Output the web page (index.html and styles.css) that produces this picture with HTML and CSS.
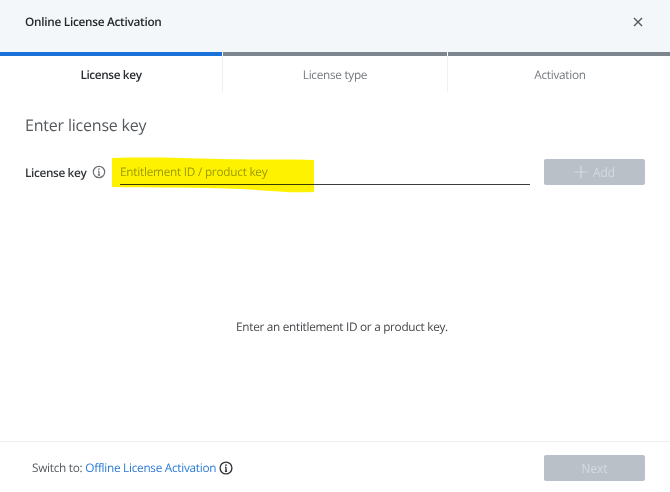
FILE: index.html
```html
<!DOCTYPE html>
<html lang="en">
<head>
<meta charset="utf-8">
<title>Online License Activation</title>
<link rel="stylesheet" href="styles.css">
</head>
<body>
<div class="dialog">
  <header class="header">
    <h1 class="title">Online License Activation</h1>
    <svg class="close" width="10" height="10" viewBox="0 0 10 10"><path d="M1 1l8 8M9 1l-8 8"/></svg>
  </header>
  <nav class="steps">
    <div class="step active">License key</div>
    <div class="step">License type</div>
    <div class="step">Activation</div>
  </nav>
  <main class="content">
    <h2 class="heading">Enter license key</h2>
    <div class="key-row">
      <span class="key-label">License key</span>
      <svg class="info" width="14" height="14" viewBox="0 0 14 14"><circle cx="7" cy="7" r="5.7"/><path d="M7 6.2v4M5.9 10.2h2.2M6 6.2h1"/><circle class="dot" cx="7" cy="4.1" r=".8"/></svg>
      <div class="field">
        <span class="placeholder">Entitlement ID / product key</span>
        <svg class="marker" width="204" height="36" viewBox="0 0 204 36" preserveAspectRatio="none"><path d="M1 1 C40 0 70 1 110 2 C150 3 180 2 203 3 L203 35 C180 36 165 34 130 32 C90 30 40 31 1 30Z"/></svg>
      </div>
      <button class="btn add" type="button"><svg class="plus" width="14" height="14" viewBox="0 0 14 14"><path d="M7 .5v13M.5 7h13"/></svg>Add</button>
    </div>
    <p class="empty">Enter an entitlement ID or a product key.</p>
  </main>
  <footer class="footer">
    <div class="switch">
      <span>Switch to:</span>
      <a class="link" href="#">Offline License Activation</a>
      <svg class="info strong" width="14" height="14" viewBox="0 0 14 14"><circle cx="7" cy="7" r="5.9"/><path d="M7 6.2v4M5.9 10.2h2.2M6 6.2h1"/><circle class="dot" cx="7" cy="4.1" r=".9"/></svg>
    </div>
    <button class="btn" type="button">Next</button>
  </footer>
</div>
</body>
</html>
```
FILE: styles.css
```css
* { box-sizing: border-box; }
html, body { margin: 0; height: 100%; background: #fff; }
body { font-family: "Open Sans", "Noto Sans", sans-serif; color: #3c4043; overflow: hidden; text-rendering: geometricPrecision; }
.dialog { width: 670px; height: 492px; display: flex; flex-direction: column; background: #fff; filter: blur(.35px); }
.header { height: 52px; flex: none; background: #f4f7fa; display: flex; align-items: center; justify-content: space-between; padding: 0 27px 8px 25px; }
.title { margin: 0; font-size: 11.8px; font-weight: 600; letter-spacing: -.28px; color: #24282c; }
.close { fill: none; stroke: #53585d; stroke-width: 1.4; }
.steps { height: 40px; flex: none; display: grid; grid-template-columns: 222px 224px 1fr; gap: 1px; background: linear-gradient(#fff 4px, #eef0f2 4px); }
.step { background: #fff; border-top: 4px solid #7d868e; display: flex; align-items: center; justify-content: center; font-size: 11.8px; letter-spacing: -.3px; color: #74797e; padding-top: 2px; }
.step:last-child { padding-left: 2px; }
.step.active { border-top-color: #1a72d9; color: #2b2f33; font-weight: 600; letter-spacing: -.38px; }
.content { flex: 1; display: flex; flex-direction: column; padding: 22px 25px 0; }
.heading { margin: 0; font-size: 16px; font-weight: 400; line-height: 22px; letter-spacing: -.2px; color: #55595d; }
.key-row { display: flex; align-items: flex-end; margin-top: 23px; height: 26px; }
.key-label { width: 67px; flex: none; font-size: 11.8px; font-weight: 600; letter-spacing: -.36px; color: #33373b; align-self: center; padding-top: 1px; }
.info { fill: none; stroke: #6a6f74; stroke-width: 1.2; align-self: center; flex: none; }
.info .dot { fill: #6a6f74; stroke: none; }
.field { position: relative; width: 410px; height: 26px; margin-left: 14px; padding-top: 1px; border-bottom: 1px solid #3a3e42; display: flex; align-items: center; }
.marker { position: absolute; left: -9px; top: -2px; fill: #fff200; mix-blend-mode: multiply; }
.placeholder { font-size: 11.8px; letter-spacing: -.25px; color: #9aa5a8; }
.btn { width: 101px; height: 26px; border: 0; border-radius: 2px; background: #b9c0c7; color: #d6dbe0; font: 11.8px "Open Sans", "Noto Sans", sans-serif; display: flex; align-items: center; justify-content: center; padding: 0; }
.add { margin-left: 14px; gap: 5px; }
.plus { fill: none; stroke: #d6dbe0; stroke-width: 1.2; }
.empty { margin: 134px 0 0; text-align: center; font-size: 11.8px; letter-spacing: -.3px; color: #44484c; padding-left: 14px; }
.footer { height: 51px; flex: none; border-top: 1px solid #eceef0; display: flex; align-items: flex-start; justify-content: space-between; padding: 13px 25px 0 32px; }
.switch { display: flex; align-items: center; gap: 3px; height: 26px; font-size: 11.8px; letter-spacing: -.28px; color: #55595d; }
.link { color: #2a7ad6; text-decoration: none; }
.info.strong { stroke: #33373b; stroke-width: 1.4; }
.info.strong .dot { fill: #33373b; }
```
